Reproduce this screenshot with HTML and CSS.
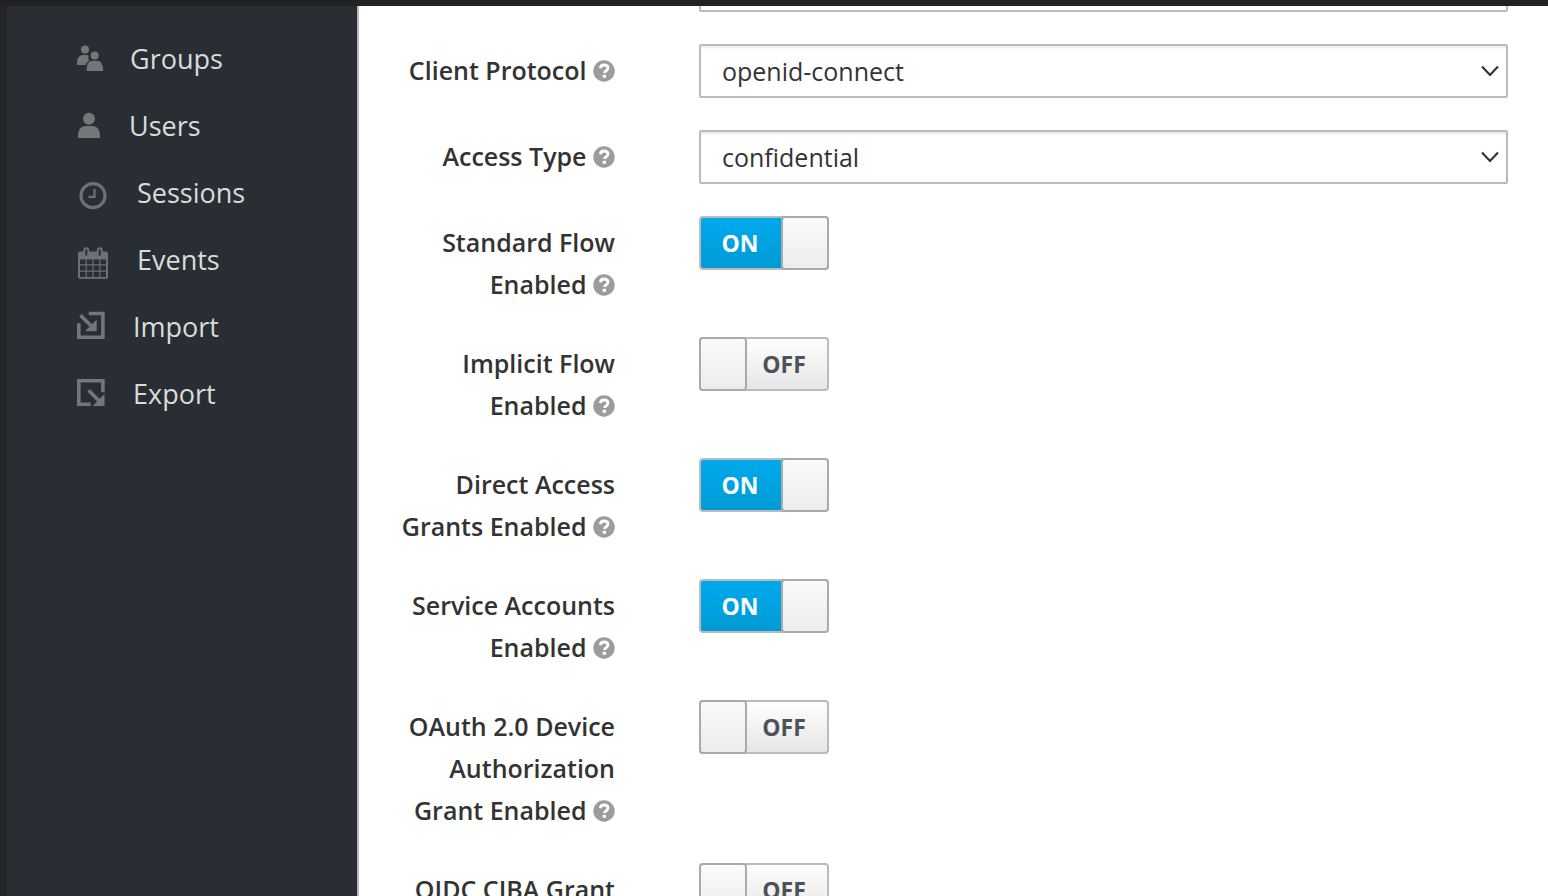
FILE: index.html
```html
<!DOCTYPE html>
<html lang="en">
<head>
<meta charset="utf-8">
<title>Client settings</title>
<link rel="stylesheet" href="styles.css">
</head>
<body>
<svg class="defs" aria-hidden="true">
  <symbol id="help" viewBox="0 0 22 22">
    <circle cx="11" cy="11" r="10.7" fill="#9c9c9c"/>
    <path d="M7.3 8.2C7.6 6 9 5 11.1 5c2.300 0 3.900 1.200 3.900 3.100 0 2.700-3.500 2.600-3.500 5" fill="none" stroke="#fff" stroke-width="2.800"/>
    <path d="M9.700 14.800h3.300v3H9.700z" fill="#fff"/>
  </symbol>
  <symbol id="chevron" viewBox="0 0 20 12">
    <path d="M2 1.500l8 8.500 8-8.500" fill="none" stroke="#333" stroke-width="2.200"/>
  </symbol>
</svg>
<div class="app">
  <nav class="sidebar">
    <a class="nav-link" href="#groups">
      <svg width="27" height="37" viewBox="0 0 27 37" fill="#757679"><circle cx="8" cy="8.500" r="4"/><circle cx="17.700" cy="14.500" r="4"/><path d="M0 24v-2c0-5 2.500-8 6-8h3c1 0 2 .3 2.500 1-.6 3 .2 3.500 1 4.500-2 1-3 2.500-3.500 4.500zM9.700 30v-2c0-5 2.500-8.300 6-8.300h4.300c3.500 0 6 3.300 6 8.300v2z"/></svg>
      <span>Groups</span>
    </a>
    <a class="nav-link" href="#users">
      <svg width="26" height="37" viewBox="0 0 26 37" fill="#757679"><circle cx="12" cy="10.700" r="6"/><path d="M1 30v-2c0-6.500 3-10 7.500-10h7c4.500 0 7.500 3.500 7.500 10v2z"/></svg>
      <span>Users</span>
    </a>
    <a class="nav-link" href="#sessions">
      <svg width="34" height="37" viewBox="0 0 34 37" fill="none" stroke="#6c707b"><circle cx="16" cy="20.700" r="12" stroke-width="3.200"/><path d="M17.500 14v7.800h-6" stroke-width="2.200"/></svg>
      <span>Sessions</span>
    </a>
    <a class="nav-link" href="#events">
      <svg width="34" height="37" viewBox="0 0 34 37"><path d="M3.300 9.500h25.400c1.400 0 2.300.9 2.300 2.300v22.700c0 1.400-.9 2.300-2.300 2.300H3.300c-1.400 0-2.300-.9-2.300-2.300V11.800c0-1.400.9-2.300 2.300-2.300z" fill="#6c707b"/><path d="M3 17.500h5.600v4.700H3zm6.800 0h5.600v4.700H9.800zm6.800 0h5.600v4.700h-5.600zm6.800 0H29v4.700h-5.600zM3 23.400h5.600v5H3zm6.800 0h5.600v5H9.800zm6.800 0h5.600v5h-5.600zm6.800 0H29v5h-5.600zM3 29.700h5.600v5.200H3zm6.800 0h5.600v5.200H9.800zm6.800 0h5.600v5.200h-5.600zm6.800 0H29v5.200h-5.600z" fill="#292e34"/><g fill="#292e34" stroke="#6c707b" stroke-width="2"><rect x="7.300" y="6.200" width="4" height="8.500" rx="2"/><rect x="20.700" y="6.200" width="4" height="8.500" rx="2"/></g></svg>
      <span>Events</span>
    </a>
    <a class="nav-link" href="#import">
      <svg width="30" height="37" viewBox="0 0 30 37" fill="none" stroke="#757679" stroke-width="3.600"><path d="M11.700 4.500h14.200v23.700H1.800V14.300M3.500 6.200l12 12"/><path d="M19.700 10.500v11.800H8z" fill="#757679" stroke="none"/></svg>
      <span>Import</span>
    </a>
    <a class="nav-link" href="#export">
      <svg width="30" height="37" viewBox="0 0 30 37" fill="none" stroke="#757679" stroke-width="3.600"><path d="M25.900 16.300V4.800H1.800v23.400h11.900M11.500 14.200l12 12"/><path d="M27.500 18v12h-12z" fill="#757679" stroke="none"/></svg>
      <span>Export</span>
    </a>
  </nav>
  <main class="content">
    <form class="form">
      <div class="row">
        <input class="field control" type="text" aria-label="Description">
      </div>
      <div class="row">
        <label class="name" for="protocol">Client Protocol <svg class="help"><use href="#help"/></svg></label>
        <div class="select control">
          <select class="field" id="protocol"><option>openid-connect</option><option>saml</option></select>
          <svg class="chevron"><use href="#chevron"/></svg>
        </div>
      </div>
      <div class="row">
        <label class="name" for="access">Access Type <svg class="help"><use href="#help"/></svg></label>
        <div class="select control">
          <select class="field" id="access"><option>confidential</option><option>public</option><option>bearer-only</option></select>
          <svg class="chevron"><use href="#chevron"/></svg>
        </div>
      </div>
      <div class="row">
        <label class="name" for="standard">Standard Flow Enabled <svg class="help"><use href="#help"/></svg></label>
        <div class="switch on"><input type="checkbox" id="standard" checked><span class="state">ON</span><span class="knob"></span></div>
      </div>
      <div class="row">
        <label class="name" for="implicit">Implicit Flow Enabled <svg class="help"><use href="#help"/></svg></label>
        <div class="switch"><input type="checkbox" id="implicit"><span class="knob"></span><span class="state">OFF</span></div>
      </div>
      <div class="row">
        <label class="name" for="direct">Direct Access Grants Enabled <svg class="help"><use href="#help"/></svg></label>
        <div class="switch on"><input type="checkbox" id="direct" checked><span class="state">ON</span><span class="knob"></span></div>
      </div>
      <div class="row">
        <label class="name" for="service">Service Accounts Enabled <svg class="help"><use href="#help"/></svg></label>
        <div class="switch on"><input type="checkbox" id="service" checked><span class="state">ON</span><span class="knob"></span></div>
      </div>
      <div class="row">
        <label class="name" for="device">OAuth 2.0 Device Authorization Grant Enabled <svg class="help"><use href="#help"/></svg></label>
        <div class="switch"><input type="checkbox" id="device"><span class="knob"></span><span class="state">OFF</span></div>
      </div>
      <div class="row">
        <label class="name" for="ciba">OIDC CIBA Grant Enabled <svg class="help"><use href="#help"/></svg></label>
        <div class="switch"><input type="checkbox" id="ciba"><span class="knob"></span><span class="state">OFF</span></div>
      </div>
    </form>
  </main>
</div>
</body>
</html>
```
FILE: styles.css
```css
* {
  box-sizing: border-box;
}

body {
  margin: 0;
  font-family: "Open Sans", "Noto Sans", sans-serif;
  font-size: 25px;
  color: #333;
  background: #fff;
}

.defs {
  display: none;
}

.app {
  display: flex;
  height: 100vh;
  overflow: hidden;
  border-top: 6px solid #222124;
}

.sidebar {
  flex: none;
  width: 359px;
  padding: 20px 0 0 70px;
  background: #292e34;
  border-left: 7px solid #242427;
  border-right: 2px solid #b8b9bb;
}

.nav-link {
  display: flex;
  align-items: center;
  gap: 26px;
  height: 67px;
  font-size: 27px;
  color: #dbdbda;
  text-decoration: none;
}

.nav-link span {
  padding-bottom: 3px;
}

.content {
  flex: 1;
  min-width: 0;
  overflow: hidden;
}

/* The form is scrolled so that its first field is mostly out of view. */
.form {
  display: grid;
  gap: 32px;
  margin-top: -48px;
  padding: 0 40px 32px 20px;
}

.row {
  display: grid;
  grid-template-columns: 236px minmax(0, 1fr);
  column-gap: 84px;
  align-items: start;
  min-height: 54px;
}

.name {
  padding-top: 5px;
  line-height: 42px;
  font-weight: 600;
  text-align: right;
}

.help {
  width: 22px;
  height: 22px;
  vertical-align: -2px;
}

.control {
  grid-column: 2;
}

.field {
  width: 100%;
  height: 54px;
  margin: 0;
  padding: 0 48px 0 21px;
  font: inherit;
  color: #333;
  background: #fff;
  border: 2px solid #bbb;
  border-radius: 2px;
  box-shadow: inset 0 2px 2px rgba(0, 0, 0, 0.08);
  appearance: none;
}

.select {
  display: grid;
  align-items: center;
}

.select > * {
  grid-area: 1 / 1;
}

.chevron {
  justify-self: end;
  width: 20px;
  height: 12px;
  margin-right: 8px;
  pointer-events: none;
}

.switch {
  position: relative;
  display: flex;
  width: 130px;
  height: 54px;
  border: 2px solid #bbb;
  border-radius: 4px;
  background: linear-gradient(#fefefe, #e6e6e6);
}

.switch input {
  position: absolute;
  inset: 0;
  width: 100%;
  height: 100%;
  margin: 0;
  opacity: 0;
}

.switch.on {
  background: linear-gradient(#00a9ec, #009bd6);
}

.state {
  flex: 1;
  padding-right: 4px;
  font-size: 23px;
  font-weight: 700;
  line-height: 51px;
  text-align: center;
  color: #4d5258;
}

.on .state {
  color: #fff;
}

.knob {
  width: 48px;
  margin: -2px;
  border: 2px solid #aaa;
  border-radius: 4px;
  background: linear-gradient(#fafafa, #ededed);
}
```
